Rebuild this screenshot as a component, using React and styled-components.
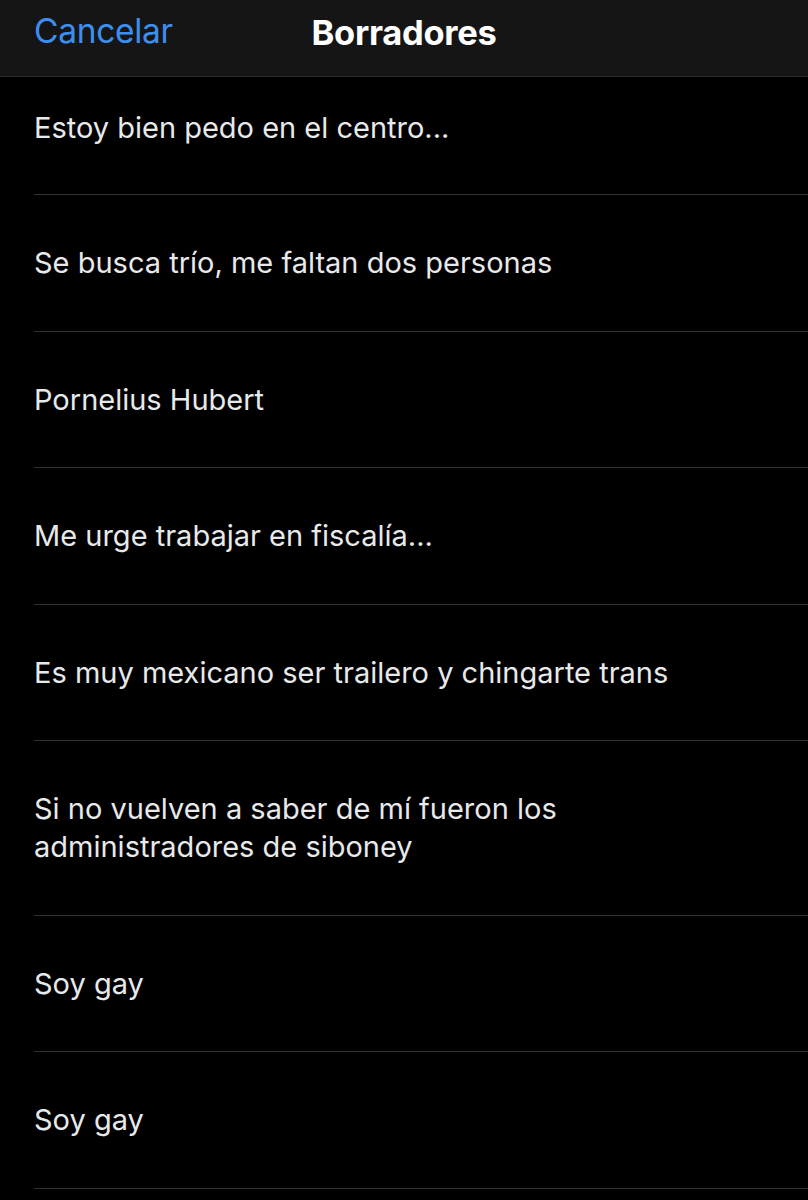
import React from 'react';
import styled, { createGlobalStyle } from 'styled-components';

const drafts = [
  'Estoy bien pedo en el centro...',
  'Se busca trío, me faltan dos personas',
  'Pornelius Hubert',
  'Me urge trabajar en fiscalía...',
  'Es muy mexicano ser trailero y chingarte trans',
  'Si no vuelven a saber de mí fueron los administradores de siboney',
  'Soy gay',
  'Soy gay',
];

const App = () => (
  <Screen>
    <GlobalStyle />
    <Header>
      <Cancel>Cancelar</Cancel>
      <Title>Borradores</Title>
    </Header>
    <List>
      {drafts.map((text, i) => (
        <Row key={i} first={i === 0}>
          <DraftText>{text}</DraftText>
        </Row>
      ))}
    </List>
  </Screen>
);

export default App;

const GlobalStyle = createGlobalStyle`
  html, body {
    margin: 0;
    padding: 0;
    background: #000;
  }
  body {
    font-family: Inter, "Noto Sans", sans-serif;
    -webkit-font-smoothing: antialiased;
  }
`;

const Screen = styled.div`
  width: 808px;
  height: 1200px;
  overflow: hidden;
  background: #000;
`;

const Header = styled.div`
  position: relative;
  height: 76px;
  display: flex;
  align-items: center;
  justify-content: center;
  background: #151515;
  border-bottom: 1px solid #2a2a2a;
`;

const Cancel = styled.span`
  position: absolute;
  left: 34px;
  top: 11px;
  font-size: 33.5px;
  color: #3d8fef;
  letter-spacing: -0.3px;
`;

const Title = styled.span`
  margin-top: -12px;
  font-size: 34.5px;
  font-weight: 700;
  color: #fff;
  letter-spacing: -0.3px;
`;

const List = styled.div`
  display: flex;
  flex-direction: column;
  padding-left: 34px;
`;

const Row = styled.div`
  padding: ${({ first }) => (first ? '32px 0 47px' : '49px 0 48.5px')};
  border-bottom: 1px solid #2f3336;
`;

const DraftText = styled.div`
  font-size: 29px;
  line-height: 38px;
  color: #e7e9ea;
  max-width: 700px;
`;
